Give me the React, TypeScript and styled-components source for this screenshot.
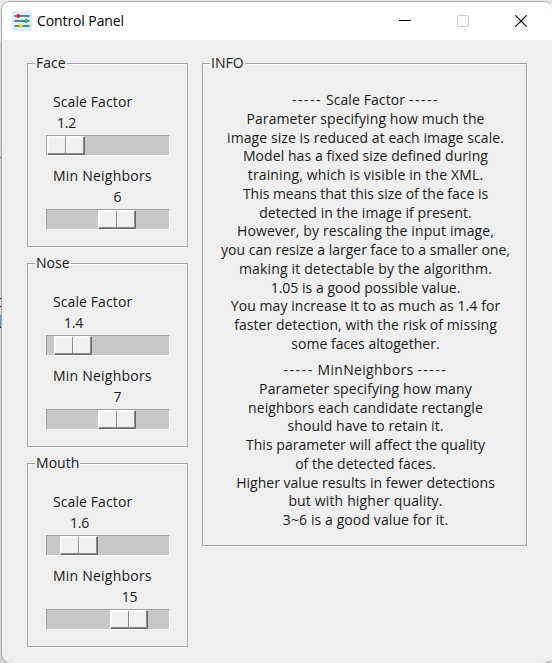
import React from 'react';
import styled, { createGlobalStyle } from 'styled-components';

const GlobalStyle = createGlobalStyle`
  * { box-sizing: border-box; }
  html, body { margin: 0; padding: 0; overflow: hidden; }
  body {
    background: #e3e3e3;
    font-family: "Open Sans", "Noto Sans", sans-serif;
    font-size: 14px;
    color: #1a1a1a;
  }
`;

const Desktop = styled.div`
  position: relative;
  width: 552px;
  height: 663px;
  padding: 1px 0 0 1px;
  overflow: hidden;
  background: linear-gradient(#e8e8e8 0 42px, #d2d2d2 42px);
`;

/* Slivers of the document that show beside the window's left edge. */
const Sliver = styled.div<{ $top: number; $height: number; $color: string }>`
  position: absolute;
  left: 0;
  top: ${p => p.$top}px;
  width: 1px;
  height: ${p => p.$height}px;
  background: ${p => p.$color};
`;

const Window = styled.div`
  width: 552px;
  height: 663px;
  border: 1px solid #acacac;
  border-right-color: #efefef;
  border-radius: 9px 9px 10px 10px;
  background: #efefef;
  overflow: hidden;
`;

const TitleBar = styled.header`
  display: flex;
  align-items: center;
  height: 38px;
  padding: 0 2px 0 10px;
  background: #fff;
`;

const Title = styled.h1`
  flex: 1;
  margin: 0 0 0 5px;
  font-size: 14px;
  font-weight: 400;
  line-height: 20px;
  letter-spacing: -0.1px;
  color: #000;
`;

const Caption = styled.button`
  display: flex;
  align-items: center;
  justify-content: center;
  width: 58px;
  height: 38px;
  padding: 0;
  border: 0;
  background: none;
`;

const Content = styled.main`
  display: flex;
  align-items: flex-start;
  gap: 14px;
  padding: 23px 0 0 25px;
`;

const Column = styled.div`
  display: flex;
  flex-direction: column;
  gap: 16px;
`;

const Group = styled.section<{ $width: number; $height: number }>`
  width: ${p => p.$width}px;
  height: ${p => p.$height}px;
  border: 1px solid #a2a2a2;
  box-shadow: 1px 1px 0 #fbfbfb, inset 1px 1px 0 #fbfbfb;
`;

const GroupTitle = styled.h2`
  width: max-content;
  height: 20px;
  margin: -11px 0 0 7px;
  padding: 0 1px;
  background: #efefef;
  font-size: 14px;
  font-weight: 400;
  line-height: 20px;
  letter-spacing: 0.05px;
`;

const Scales = styled.div`
  padding: 18px 0 0 18px;
`;

const Scale = styled.div`
  height: 74px;
`;

const ScaleLabel = styled.div<{ $spacing: number }>`
  height: 21px;
  padding-left: 7px;
  line-height: 21px;
  letter-spacing: ${p => p.$spacing}px;
`;

const ScaleValue = styled.div<{ $at: number }>`
  width: 40px;
  height: 23px;
  margin-left: ${p => p.$at}px;
  padding-left: 1px;
  text-align: center;
  line-height: 21px;
  letter-spacing: -0.2px;
`;

const Trough = styled.div`
  width: 124px;
  height: 21px;
  border: 1px solid;
  border-color: #a2a2a2 #fdfdfd #fdfdfd #a2a2a2;
  background: #c8c8c8;
`;

const Thumb = styled.div<{ $at: number }>`
  display: flex;
  width: 38px;
  height: 19px;
  margin-left: ${p => p.$at}px;
  border: 1px solid;
  border-color: #fff #6c6c6c #6c6c6c #fff;
  box-shadow: inset -1px -1px 0 #8a8a8a, inset 1px 1px 0 #fafafa;
  background: #f0f0f0;

  &::after {
    content: '';
    width: 2px;
    height: 16px;
    margin-left: 17px;
    background: linear-gradient(90deg, #8c8c8c 50%, #fff 50%);
  }
`;

const InfoBlock = styled.div<{ $top: number }>`
  padding: ${p => p.$top}px 0 0 2px;
`;

const Line = styled.div<{ $spacing: number }>`
  height: 18.75px;
  line-height: 18.75px;
  text-align: center;
  white-space: nowrap;
  letter-spacing: ${p => p.$spacing}px;
`;

const Dashes = styled.span`
  letter-spacing: 1.5px;
`;

type ScaleData = { label: string; spacing: number; value: string; at: number };

const scaleFactor = (value: string, at: number): ScaleData => ({ label: 'Scale Factor', spacing: 0.1, value, at });
const minNeighbors = (value: string, at: number): ScaleData => ({ label: 'Min Neighbors', spacing: 0.22, value, at });

const groups = [
  { name: 'Face', scales: [scaleFactor('1.2', 0), minNeighbors('6', 51)] },
  { name: 'Nose', scales: [scaleFactor('1.4', 7), minNeighbors('7', 51)] },
  { name: 'Mouth', scales: [scaleFactor('1.6', 13), minNeighbors('15', 63)] },
];

type InfoLine = [text: string, spacing: number];

const scaleInfo: InfoLine[] = [
  ['Parameter specifying how much the', 0.11],
  ['image size is reduced at each image scale.', 0.08],
  ['Model has a fixed size defined during', 0.07],
  ['training, which is visible in the XML.', 0.14],
  ['This means that this size of the face is', -0.02],
  ['detected in the image if present.', 0.05],
  ['However, by rescaling the input image,', 0.12],
  ['you can resize a larger face to a smaller one,', 0],
  ['making it detectable by the algorithm.', 0.16],
  ['1.05 is a good possible value.', 0.02],
  ['You may increase it to as much as 1.4 for', 0.08],
  ['faster detection, with the risk of missing', 0.06],
  ['some faces altogether.', 0.02],
];

const neighborInfo: InfoLine[] = [
  ['Parameter specifying how many', 0.13],
  ['neighbors each candidate rectangle', 0.07],
  ['should have to retain it.', 0.07],
  ['This parameter will affect the quality', 0.04],
  ['of the detected faces.', 0.02],
  ['Higher value results in fewer detections', 0.02],
  ['but with higher quality.', 0.15],
  ['3~6 is a good value for it.', 0.1],
];

const Info = ({ heading, spacing, lines, top }: { heading: string; spacing: number; lines: InfoLine[]; top: number }) => (
  <InfoBlock $top={top}>
    <Line $spacing={spacing}>
      <Dashes>-----</Dashes> {heading} <Dashes>-----</Dashes>
    </Line>
    {lines.map(([text, lineSpacing]) => <Line key={text} $spacing={lineSpacing}>{text}</Line>)}
  </InfoBlock>
);

const AppIcon = () => (
  <svg width="20" height="20" viewBox="0 0 20 20">
    <rect width="20" height="20" rx="3" fill="#d9f1fb" />
    <path d="M2.5 5h15M2.5 10h15M2.5 15h15" stroke="#3c5870" strokeWidth="1.3" />
    <circle cx="6.3" cy="5" r="1.9" fill="#e8202c" />
    <circle cx="14" cy="10" r="1.9" fill="#2eae5c" />
    <circle cx="8.7" cy="15" r="1.9" fill="#f4d91c" />
  </svg>
);

const App = () => (
  <>
    <GlobalStyle />
    <Desktop>
      <Sliver $top={145} $height={1} $color="#8fc4cc" />
      <Sliver $top={157} $height={1} $color="#3b7f8b" />
      <Sliver $top={298} $height={1} $color="#222" />
      <Sliver $top={306} $height={1} $color="#222" />
      <Sliver $top={315} $height={12} $color="#4c94d8" />
      <Sliver $top={327} $height={1} $color="#222" />
      <Window>
        <TitleBar>
          <AppIcon />
          <Title>Control Panel</Title>
          <Caption aria-label="Minimize">
            <svg width="12" height="12"><path d="M0 5.5h12" stroke="#000" /></svg>
          </Caption>
          <Caption aria-label="Maximize" disabled>
            <svg width="12" height="12"><rect x=".5" y=".5" width="11" height="11" rx="1" fill="none" stroke="#c8c8c8" /></svg>
          </Caption>
          <Caption aria-label="Close">
            <svg width="12" height="12"><path d="M.3 .3l11.4 11.4M11.7 .3L.3 11.7" stroke="#000" strokeWidth="1.1" /></svg>
          </Caption>
        </TitleBar>
        <Content>
          <Column>
            {groups.map(group => (
              <Group key={group.name} $width={161} $height={184}>
                <GroupTitle>{group.name}</GroupTitle>
                <Scales>
                  {group.scales.map(scale => (
                    <Scale key={scale.label}>
                      <ScaleLabel $spacing={scale.spacing}>{scale.label}</ScaleLabel>
                      <ScaleValue $at={scale.at}>{scale.value}</ScaleValue>
                      <Trough><Thumb $at={scale.at} /></Trough>
                    </Scale>
                  ))}
                </Scales>
              </Group>
            ))}
          </Column>
          <Group $width={325} $height={483}>
            <GroupTitle>INFO</GroupTitle>
            <Info heading="Scale Factor" spacing={0.1} lines={scaleInfo} top={18} />
            <Info heading="MinNeighbors" spacing={0.3} lines={neighborInfo} top={7.5} />
          </Group>
        </Content>
      </Window>
    </Desktop>
  </>
);

export default App;
